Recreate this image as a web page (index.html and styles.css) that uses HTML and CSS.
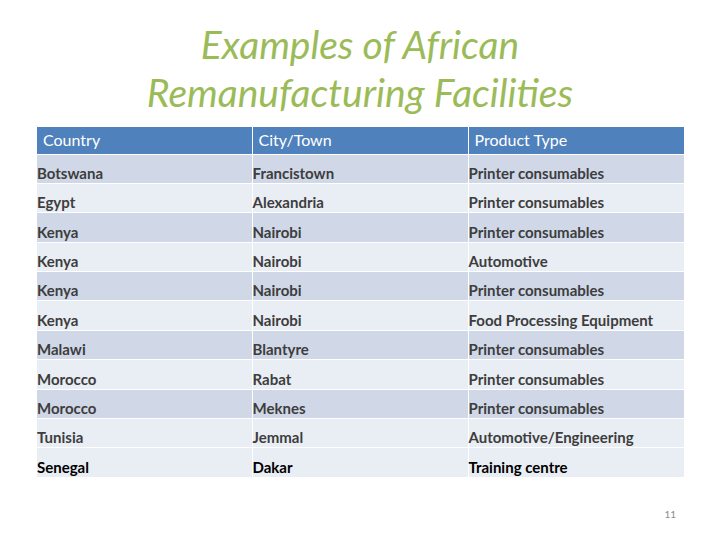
FILE: index.html
```html
<!DOCTYPE html>
<html>
<head>
<meta charset="utf-8">
<link rel="stylesheet" href="styles.css">
</head>
<body>
<div class="slide">
  <h1 class="title">Examples of African<br>Remanufacturing Facilities</h1>
  <table class="grid">
    <colgroup><col class="c1"><col class="c2"><col class="c3"></colgroup>
    <thead>
      <tr><th>Country</th><th>City/Town</th><th>Product Type</th></tr>
    </thead>
    <tbody>
      <tr class="dark"><td>Botswana</td><td>Francistown</td><td>Printer consumables</td></tr>
      <tr class="light"><td>Egypt</td><td>Alexandria</td><td>Printer consumables</td></tr>
      <tr class="dark"><td>Kenya</td><td>Nairobi</td><td>Printer consumables</td></tr>
      <tr class="light"><td>Kenya</td><td>Nairobi</td><td>Automotive</td></tr>
      <tr class="dark"><td>Kenya</td><td>Nairobi</td><td>Printer consumables</td></tr>
      <tr class="light"><td>Kenya</td><td>Nairobi</td><td>Food Processing Equipment</td></tr>
      <tr class="dark"><td>Malawi</td><td>Blantyre</td><td>Printer consumables</td></tr>
      <tr class="light"><td>Morocco</td><td>Rabat</td><td>Printer consumables</td></tr>
      <tr class="dark"><td>Morocco</td><td>Meknes</td><td>Printer consumables</td></tr>
      <tr class="light"><td>Tunisia</td><td>Jemmal</td><td>Automotive/Engineering</td></tr>
      <tr class="light last"><td>Senegal</td><td>Dakar</td><td>Training centre</td></tr>
    </tbody>
  </table>
  <div class="footer"><span class="pagenum">11</span></div>
</div>
</body>
</html>
```
FILE: styles.css
```css
html, body {
  margin: 0;
  padding: 0;
  background: #ffffff;
}
.slide {
  width: 720px;
  height: 540px;
  font-family: Lato, "Open Sans", "Liberation Sans", sans-serif;
  display: flex;
  flex-direction: column;
}
.title {
  margin: 0;
  padding-top: 20px;
  height: 127px;
  flex: none;
  box-sizing: border-box;
  text-align: center;
  font-weight: normal;
  font-style: italic;
  font-size: 39px;
  line-height: 48px;
  color: #9bbb59;
}
.grid {
  margin-left: 37px;
  width: 647px;
  border-collapse: collapse;
  table-layout: fixed;
}
.c1 { width: 215px; }
.c2 { width: 216px; }
.c3 { width: 216px; }
.grid th {
  background: #4f81bd;
  color: #ffffff;
  font-weight: normal;
  font-size: 16px;
  line-height: 20px;
  text-align: left;
  height: 27px;
  padding: 0 0 0 6px;
  box-sizing: border-box;
  border-left: 1px solid #ffffff;
  vertical-align: middle;
}
.grid th:first-child { border-left: none; }
.grid td {
  font-size: 15px;
  line-height: 18px;
  font-weight: bold;
  color: #3d3d3d;
  height: 29.4px;
  padding: 0 0 1px 0;
  box-sizing: border-box;
  border-left: 1px solid #ffffff;
  border-top: 1px solid #ffffff;
  vertical-align: bottom;
}
.grid td:first-child { border-left: none; }
.grid tr.dark td { background: #d0d8e8; }
.grid tr.light td { background: #e9edf4; }
.grid tr.last td { color: #000000; }
.footer {
  flex: 1;
  display: flex;
  justify-content: flex-end;
  align-items: flex-start;
  padding: 31px 44px 0 0;
}
.pagenum {
  font-size: 10px;
  color: #8c8c8c;
}
```
